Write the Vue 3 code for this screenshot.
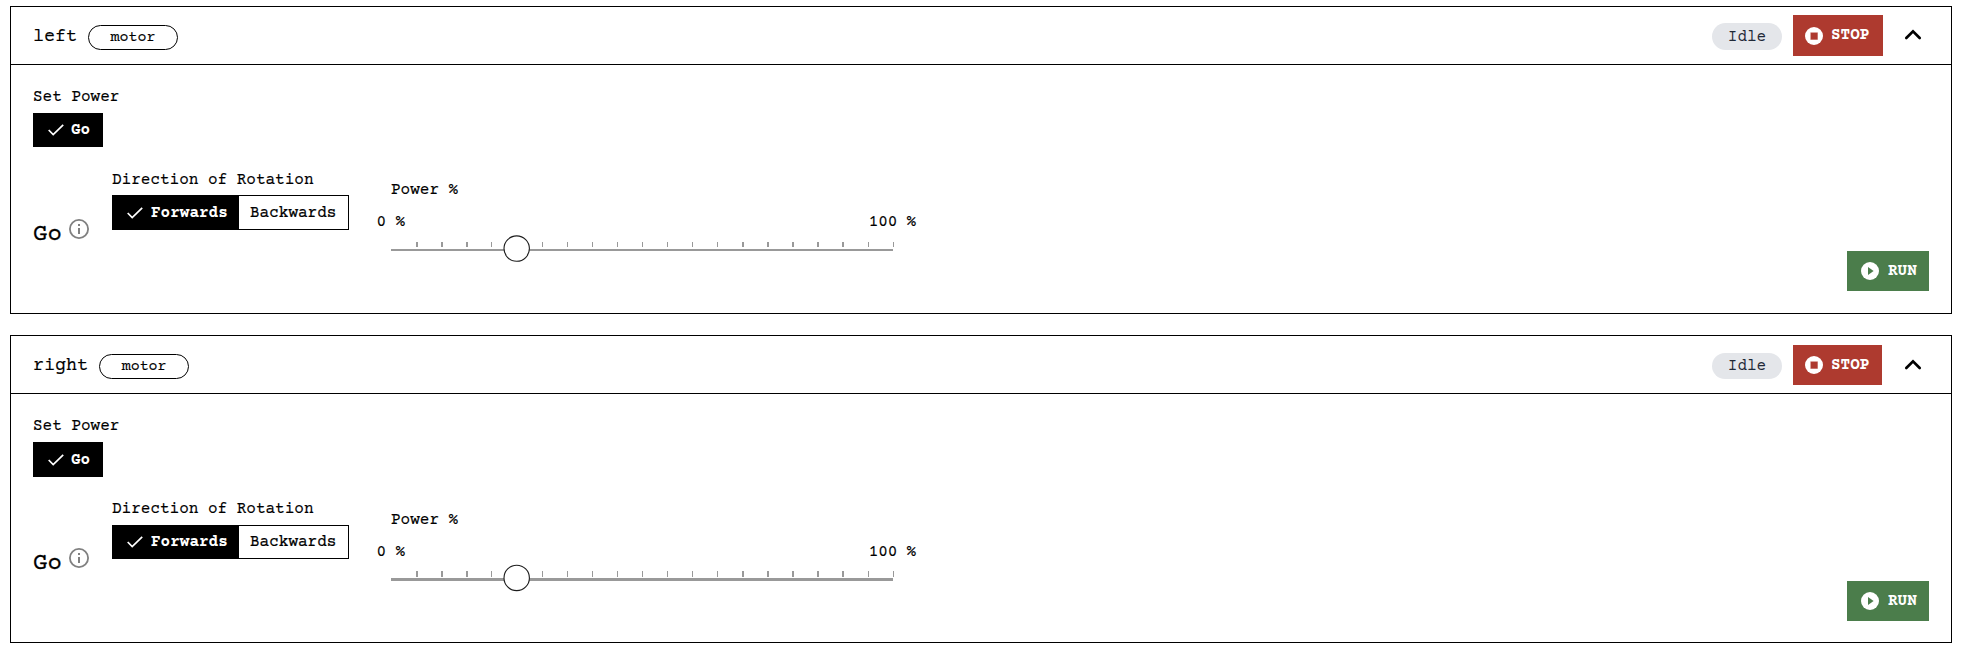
<script setup>
const motors = [
  { name: 'left', tickY: 7, tickH: 5, trackY: 14, trackH: 2, thumbY: 13.6 },
  { name: 'right', tickY: 6, tickH: 6, trackY: 13, trackH: 3, thumbY: 12.9 },
]
const ticks = Array.from({ length: 20 }, (_, i) => {
  const k = i + 1
  const wide = k < 4 || (k > 13 && k < 19)
  return { x: wide ? Math.floor(k * 25.1) : Math.round(k * 25.1), w: wide ? 2 : 1 }
})
</script>

<template>
  <main class="page">
    <section v-for="m in motors" :key="m.name" class="card" :class="m.name">
      <header class="head">
        <h2 class="name">{{ m.name }}</h2>
        <span class="pill">motor</span>
        <div class="actions">
          <span class="status">Idle</span>
          <button class="btn stop">
            <svg width="18" height="18" viewBox="0 0 18 18">
              <circle cx="9" cy="9" r="9" fill="#fff" />
              <rect x="5.4" y="5.4" width="7.4" height="7.4" fill="#c4685e" />
              <rect x="6" y="6" width="6.2" height="6.2" fill="#ae3a2f" />
            </svg>
            <span>STOP</span>
          </button>
          <svg class="chevron" width="16" height="11" viewBox="0 0 16 11">
            <path d="M1.3 9 L8 2.3 L14.7 9" fill="none" stroke="#000" stroke-width="2.7" stroke-linecap="round" />
          </svg>
        </div>
      </header>

      <div class="body">
        <div class="label">Set Power</div>
        <button class="mode">
          <svg class="check" width="16" height="12" viewBox="0 0 16 12">
            <path d="M.7 6 L5.2 10.6 L15.2 .8" fill="none" stroke="#fff" stroke-width="1.7" />
          </svg>
          <span>Go</span>
        </button>

        <div class="row">
          <div class="go">
            <span>Go</span>
            <svg width="20" height="20" viewBox="0 0 20 20">
              <circle cx="10" cy="10" r="9.1" fill="none" stroke="#808080" stroke-width="1.8" />
              <path d="M10 9V15M10 5V7" stroke="#808080" stroke-width="2" />
            </svg>
          </div>

          <div class="direction">
            <div class="label">Direction of Rotation</div>
            <div class="toggle">
              <button class="option on">
                <svg class="check" width="16" height="12" viewBox="0 0 16 12">
                  <path d="M.7 6 L5.2 10.6 L15.2 .8" fill="none" stroke="#fff" stroke-width="1.7" />
                </svg>
                <span>Forwards</span>
              </button>
              <button class="option">Backwards</button>
            </div>
          </div>

          <div class="power">
            <div class="label">Power %</div>
            <div class="ends"><span>0 %</span><span>100 %</span></div>
            <svg class="slider" width="502" height="27">
              <rect v-for="t in ticks" :key="t.x" :x="t.x" :y="m.tickY" :width="t.w" :height="m.tickH" fill="#999" />
              <rect x="0" :y="m.trackY" width="502" :height="m.trackH" fill="#999" />
              <circle cx="125.7" :cy="m.thumbY" r="12.7" fill="#fff" stroke="#1c1c1c" stroke-width="1.1" />
            </svg>
          </div>

          <button class="btn run">
            <svg width="18" height="18" viewBox="0 0 18 18">
              <circle cx="9" cy="9" r="9" fill="#fff" />
              <path d="M7 5V13L12.6 9Z" fill="#4b7d4b" />
            </svg>
            <span>RUN</span>
          </button>
        </div>
      </div>
    </section>
  </main>
</template>

<style>
body {
  background: #fff;
}
</style>

<style scoped>
* {
  box-sizing: border-box;
}
.page {
  display: flow-root;
  height: 652px;
  overflow: hidden;
  font: 16px/20px "Courier Prime", "Liberation Mono", "Courier New", monospace;
  color: #000;
}
button {
  font: inherit;
  color: inherit;
  border: 0;
  border-radius: 0;
  margin: 0;
  padding: 0;
  background: none;
  text-align: left;
}
svg {
  display: block;
  flex: none;
  overflow: visible;
}
.card {
  height: 308px;
  margin: 6px 12px 21px 10px;
  border: 1px solid #000;
}
.head {
  display: flex;
  align-items: flex-start;
  height: 58px;
  padding: 0 22px;
  border-bottom: 1px solid #000;
}
.name {
  margin: 19px 11px 0 0;
  font-size: 18.4px;
  line-height: 22px;
  font-weight: 400;
  -webkit-text-stroke: 0.15px #000;
}
.pill {
  width: 90px;
  height: 25px;
  margin-top: 18px;
  border: 1px solid #000;
  border-radius: 13px;
  font-size: 15px;
  line-height: 23px;
  text-align: center;
  -webkit-text-stroke: 0.15px #000;
}
.actions {
  display: flex;
  align-items: flex-start;
  margin-left: auto;
}
.right .actions {
  margin-top: 1px;
}
.status {
  width: 70px;
  height: 27px;
  margin: 16px 11px 0 0;
  border-radius: 14px;
  background: #e4e6ea;
  color: #1f2937;
  line-height: 28px;
  text-align: center;
}
.right .status {
  height: 26px;
  line-height: 26px;
}
.btn {
  display: flex;
  align-items: center;
  height: 40px;
  color: #fff;
  font-weight: 700;
}
.stop {
  width: 90px;
  margin-top: 8px;
  padding-left: 12px;
  gap: 8px;
  background: #ae3a2f;
}
.left .stop {
  height: 41px;
}
.left .stop span {
  margin-top: -2px;
}
.right .stop {
  width: 89px;
  margin-right: 1px;
}
.chevron {
  margin: 22px 8px 0 22px;
}
.body {
  padding: 22px 22px 0;
}
.label {
  height: 20px;
  white-space: nowrap;
  -webkit-text-stroke: 0.15px #000;
}
.mode {
  display: flex;
  align-items: center;
  width: 70px;
  height: 34px;
  margin-top: 6px;
  padding-left: 15px;
  gap: 7px;
  background: #000;
  color: #fff;
  font-weight: 700;
}
.right .mode {
  height: 35px;
}
.row {
  display: flex;
  align-items: flex-start;
  margin-top: 23px;
}
.right .row {
  margin-top: 22px;
}
.go {
  display: flex;
  align-items: flex-start;
  width: 79px;
  margin-top: 49px;
  font-size: 24px;
  line-height: 28px;
  -webkit-text-stroke: 0.3px #000;
}
.go span {
  margin-top: 2px;
}
.go svg {
  margin-left: 7px;
}
.direction {
  width: 237px;
}
.toggle {
  display: flex;
  height: 35px;
  margin-top: 5px;
  border: 1px solid #000;
}
.right .toggle {
  height: 34px;
  margin-top: 6px;
}
.option {
  display: flex;
  align-items: center;
  flex: 1;
  padding-left: 11px;
  -webkit-text-stroke: 0.2px #000;
}
.option.on {
  flex: none;
  width: 126px;
  gap: 8px;
  padding-left: 14px;
  background: #000;
  color: #fff;
  font-weight: 700;
  -webkit-text-stroke: 0;
}
.power {
  width: 502px;
  margin: 10px 0 0 42px;
}
.ends {
  display: flex;
  justify-content: space-between;
  margin: 12px -23px 3px -14.4px;
  letter-spacing: -0.15px;
  -webkit-text-stroke: 0.15px #000;
}
.run {
  width: 82px;
  margin: 81px 0 0 auto;
  padding-left: 13.5px;
  gap: 9.5px;
  background: #4b7d4b;
}
.right .power {
  margin-top: 11px;
}
.right .run {
  margin-top: 82px;
}
</style>
